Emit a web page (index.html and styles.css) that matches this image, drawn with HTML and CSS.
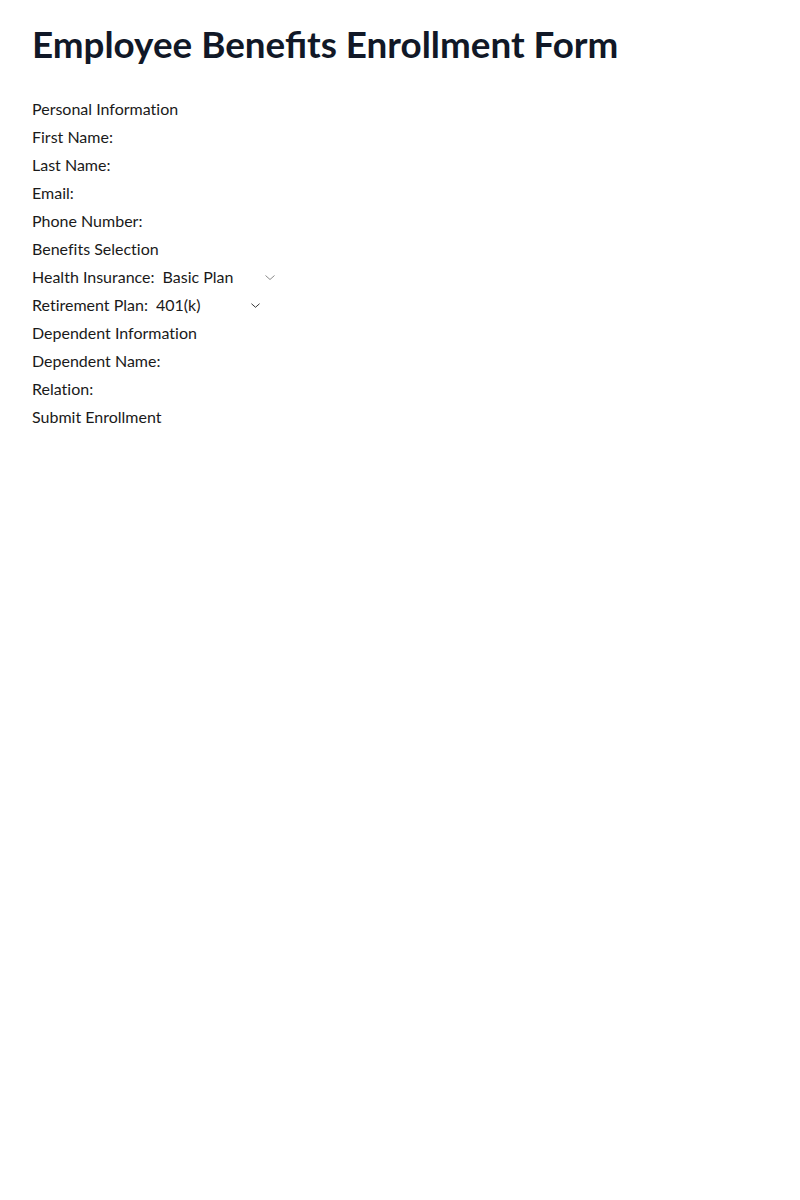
FILE: index.html
```html
<!DOCTYPE html>
<html lang="en">
<head>
<meta charset="utf-8">
<title>Employee Benefits Enrollment Form</title>
<link rel="stylesheet" href="styles.css">
</head>
<body>
<main class="page">
  <h1 class="title">Employee Benefits Enrollment Form</h1>
  <form class="form">
    <div class="section">Personal Information</div>
    <div class="row"><label>First Name:</label></div>
    <div class="row"><label>Last Name:</label></div>
    <div class="row"><label>Email:</label></div>
    <div class="row"><label>Phone Number:</label></div>
    <div class="section">Benefits Selection</div>
    <div class="row">
      <label for="health">Health Insurance:</label>
      <span class="select-wrap select-health">
        <select id="health" class="select"><option>Basic Plan</option><option>Premium Plan</option></select>
        <svg class="chevron chevron-light" viewBox="0 0 10 5" width="10" height="5"><path d="M0.5 0.5l4.5 4 4.5-4" fill="none" stroke="currentColor" stroke-width="1"/></svg>
      </span>
    </div>
    <div class="row">
      <label for="retire">Retirement Plan:</label>
      <span class="select-wrap select-retire">
        <select id="retire" class="select"><option>401(k)</option><option>Roth IRA</option></select>
        <svg class="chevron chevron-dark" viewBox="0 0 10 5" width="9" height="5"><path d="M0.5 0.5l4.5 4 4.5-4" fill="none" stroke="currentColor" stroke-width="1"/></svg>
      </span>
    </div>
    <div class="section">Dependent Information</div>
    <div class="row"><label>Dependent Name:</label></div>
    <div class="row"><label>Relation:</label></div>
    <div class="row"><button type="button" class="submit">Submit Enrollment</button></div>
  </form>
</main>
</body>
</html>
```
FILE: styles.css
```css
html, body {
  margin: 0;
  padding: 0;
  background: #ffffff;
}
body {
  font-family: Lato, "Liberation Sans", sans-serif;
  color: #1a1a1a;
}
.page {
  padding: 24px 32px;
}
.title {
  margin: 0 0 31px 0;
  font-size: 36.8px;
  line-height: 40px;
  font-weight: 700;
  color: #111827;
}
.form {
  display: flex;
  flex-direction: column;
  font-size: 16px;
  line-height: 28px;
  font-variant-ligatures: no-common-ligatures;
}
.section, .row {
  height: 28px;
  display: flex;
  align-items: center;
}
.row label {
  margin-right: 8px;
}
.select-wrap {
  position: relative;
  display: inline-flex;
  align-items: center;
}
.select {
  appearance: none;
  -webkit-appearance: none;
  border: none;
  background: transparent;
  font: inherit;
  color: inherit;
  padding: 0;
  margin: 0;
  outline: none;
}
.select-health .select { width: 116px; }
.select-retire .select { width: 108px; }
.chevron {
  position: absolute;
  right: 4px;
  top: 50%;
  margin-top: -2px;
}
.chevron-light { color: #8a8a8a; }
.chevron-dark { color: #222222; }
.submit {
  border: none;
  background: transparent;
  padding: 0;
  margin: 0;
  font: inherit;
  color: inherit;
  cursor: pointer;
}
```
